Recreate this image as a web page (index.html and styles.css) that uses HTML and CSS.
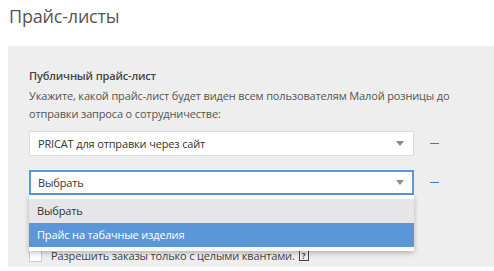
FILE: index.html
```html
<!DOCTYPE HTML>
<html>
<head>
<meta name="viewport" content="width=device-width, initial-scale=1">
<title>Прайс-листы</title>
<link rel="stylesheet" href="styles.css">
</head>
<body>
<h1 class="title">Прайс-листы</h1>
<div class="panel">
  <div class="subtitle">Публичный прайс-лист</div>
  <p class="hint">Укажите, какой прайс-лист будет виден всем пользователям Малой розницы до отправки запроса о сотрудничестве:</p>

  <div class="row">
    <div class="select">
      <span>PRICAT для отправки через сайт</span>
      <i class="arrow"></i>
    </div>
    <span class="dash"></span>
  </div>

  <div class="row">
    <div class="select open">
      <span>Выбрать</span>
      <i class="arrow"></i>
      <ul class="menu">
        <li class="hover">Выбрать</li>
        <li class="active">Прайс на табачные изделия</li>
      </ul>
    </div>
    <span class="dash"></span>
  </div>

  <label class="check">
    <span class="box"></span>
    Разрешить заказы только с целыми квантами.
    <span class="help">?</span>
  </label>
</div>
</body>
</html>
```

FILE: styles.css
```css
body {
  margin: 0;
  font-family: "Open Sans", "Liberation Sans", sans-serif;
  color: #555;
  background: #fff;
  letter-spacing: -0.15px;
}
.title {
  margin: 0;
  padding: 4px 9px 0;
  height: 42px;
  font-size: 18px;
  font-weight: normal;
  color: #555;
  letter-spacing: -0.2px;
}
.panel {
  margin-left: 8px;
  padding: 22px 0 4px 21px;
  background: #eeeeee;
}
.subtitle {
  font-size: 11px;
  font-weight: 600;
  color: #444;
  line-height: 16px;
  height: 16px;
}
.hint {
  margin: 3px 0 8px;
  font-size: 11px;
  line-height: 18px;
  height: 36px;
  width: 445px;
}
.row {
  display: flex;
  align-items: flex-start;
  height: 25px;
  margin-bottom: 14px;
}
.select {
  position: relative;
  box-sizing: border-box;
  width: 385px;
  height: 25px;
  padding: 0 8px;
  display: flex;
  align-items: center;
  justify-content: space-between;
  background: #fff;
  border: 1px solid #dcdcdc;
  font-size: 11px;
  color: #333;
}
.select.open {
  border: 2px solid #5b97d8;
  padding: 0 7px;
}
.arrow {
  width: 0;
  height: 0;
  margin-right: 1px;
  border-left: 4px solid transparent;
  border-right: 4px solid transparent;
  border-top: 5px solid #8c8c8c;
}
.dash {
  width: 9px;
  height: 1px;
  margin: 12px 0 0 16px;
  background: #3a7bd5;
}
.menu {
  position: absolute;
  left: -2px;
  right: -2px;
  top: 23px;
  margin: 0;
  padding: 4px 0 4px;
  list-style: none;
  background: #fff;
  box-shadow: 0 2px 5px rgba(0,0,0,0.25);
  z-index: 2;
}
.menu li {
  height: 24px;
  line-height: 24px;
  padding: 0 8px;
}
.menu .hover {
  background: #e6e6e6;
  color: #333;
}
.menu .active {
  background: #5b97d8;
  color: #fff;
}
.check {
  display: flex;
  align-items: center;
  margin-top: 52px;
  font-size: 11px;
  color: #444;
  height: 16px;
}
.box {
  box-sizing: border-box;
  width: 13px;
  height: 13px;
  margin-right: 9px;
  background: #fff;
  border: 1px solid #ccc;
}
.help {
  display: inline-block;
  margin-left: 4px;
  width: 8px;
  height: 9px;
  border: 1px solid #444;
  font-size: 8px;
  line-height: 9px;
  text-align: center;
  font-weight: bold;
  letter-spacing: 0;
}
```
